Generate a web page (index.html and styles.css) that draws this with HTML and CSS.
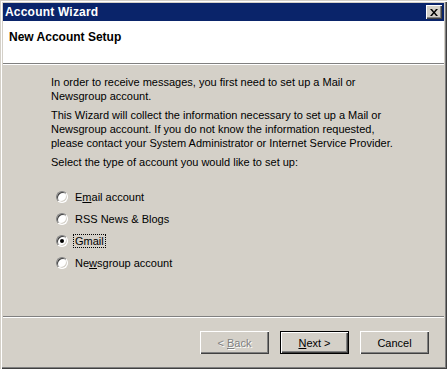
FILE: index.html
```html
<!DOCTYPE html>
<html>
<head>
  <meta charset="UTF-8" />
  <title>Account Wizard</title>
  <link rel="stylesheet" href="styles.css">
</head>
<body>

<div class="window">
  <div class="titlebar">
    <span class="title">Account Wizard</span>
    <span class="close-btn">
      <svg width="8" height="7" viewBox="0 0 8 7">
        <path d="M0 0h2l2 2.5 2-2.5h2l-3 3.5 3 3.5h-2l-2-2.5-2 2.5h-2l3-3.5z" fill="#000"/>
      </svg>
    </span>
  </div>

  <div class="header">
    <h1>New Account Setup</h1>
  </div>

  <div class="content">
    <p>In order to receive messages, you first need to set up a Mail or<br>Newsgroup account.</p>
    <p>This Wizard will collect the information necessary to set up a Mail or<br>Newsgroup account. If you do not know the information requested,<br>please contact your System Administrator or Internet Service Provider.</p>
    <p>Select the type of account you would like to set up:</p>

    <div class="options">
      <div class="option"><span class="radio"></span><span class="label">E<u>m</u>ail account</span></div>
      <div class="option"><span class="radio"></span><span class="label">RSS News &amp; Blogs</span></div>
      <div class="option"><span class="radio checked"></span><span class="label focused">Gmail</span></div>
      <div class="option"><span class="radio"></span><span class="label">Ne<u>w</u>sgroup account</span></div>
    </div>
  </div>

  <div class="footer">
    <button class="btn" disabled>&lt; <u>B</u>ack</button>
    <button class="btn default"><u>N</u>ext &gt;</button>
    <button class="btn">Cancel</button>
  </div>
</div>

</body>
</html>
```

FILE: styles.css
```css
body {
  margin: 0;
  padding: 0;
  background-color: #d4d0c8;
  font-family: 'Liberation Sans', Arial, sans-serif;
  font-size: 11px;
  color: #000;
}
.window {
  width: 447px;
  height: 369px;
  box-sizing: border-box;
  padding: 3px 3px 3px 3px;
  background-color: #d4d0c8;
  box-shadow: inset 1px 1px 0 #d4d0c8, inset 2px 2px 0 #fff,
              inset -1px -1px 0 #404040, inset -2px -2px 0 #808080;
  display: flex;
  flex-direction: column;
}
.titlebar {
  height: 18px;
  flex-shrink: 0;
  background-color: #0a246a;
  display: flex;
  align-items: center;
  justify-content: space-between;
  padding: 0 2px 0 2px;
}
.title {
  color: #fff;
  font-weight: bold;
  font-size: 12px;
  letter-spacing: 0.2px;
}
.close-btn {
  width: 16px;
  height: 14px;
  box-sizing: border-box;
  background: #d4d0c8;
  display: flex;
  align-items: center;
  justify-content: center;
  box-shadow: inset 1px 1px 0 #fff, inset -1px -1px 0 #404040, inset -2px -2px 0 #808080;
}
.header {
  height: 42px;
  flex-shrink: 0;
  background-color: #fff;
  border-bottom: 1px solid #808080;
  box-shadow: 0 1px 0 #fff;
  padding: 0 6px;
}
h1 {
  margin: 9px 0 0 0;
  font-size: 12px;
  font-weight: bold;
}
.content {
  flex: 1;
  padding: 10px 0 0 48px;
  border-bottom: 1px solid #808080;
  box-shadow: 0 1px 0 #fff;
  margin-top: 1px;
}
p {
  margin: 0 0 5px 0;
  line-height: 14px;
  white-space: nowrap;
}
.options {
  margin-top: 21px;
  display: flex;
  flex-direction: column;
  gap: 8px;
}
.option {
  display: flex;
  align-items: center;
  height: 14px;
  padding-left: 5px;
}
.radio {
  width: 12px;
  height: 12px;
  box-sizing: border-box;
  border-radius: 50%;
  background: #fff;
  border: 1px solid;
  border-color: #808080 #fff #fff #808080;
  box-shadow: inset 1px 1px 0 #404040, inset -1px -1px 0 #d4d0c8;
  position: relative;
  margin-right: 5px;
}
.radio.checked::after {
  content: "";
  position: absolute;
  left: 3px;
  top: 3px;
  width: 4px;
  height: 4px;
  border-radius: 50%;
  background: #000;
}
.label {
  padding: 0 1px;
  border: 1px dotted transparent;
}
.label.focused {
  border-color: #000;
}
.footer {
  height: 48px;
  flex-shrink: 0;
  box-sizing: border-box;
  display: flex;
  justify-content: flex-end;
  align-items: flex-start;
  padding: 13px 15px 0 0;
  gap: 11px;
  margin-top: 1px;
}
.btn {
  width: 69px;
  height: 23px;
  font-family: inherit;
  font-size: 11px;
  background: #d4d0c8;
  color: #000;
  border: none;
  padding: 0;
  box-shadow: inset 1px 1px 0 #fff, inset -1px -1px 0 #404040, inset -2px -2px 0 #808080;
}
.btn.default {
  box-shadow: inset 0 0 0 1px #000, inset 2px 2px 0 #fff, inset -2px -2px 0 #404040, inset -3px -3px 0 #808080;
}
.btn:disabled {
  color: #808080;
  text-shadow: 1px 1px 0 #fff;
}
```
